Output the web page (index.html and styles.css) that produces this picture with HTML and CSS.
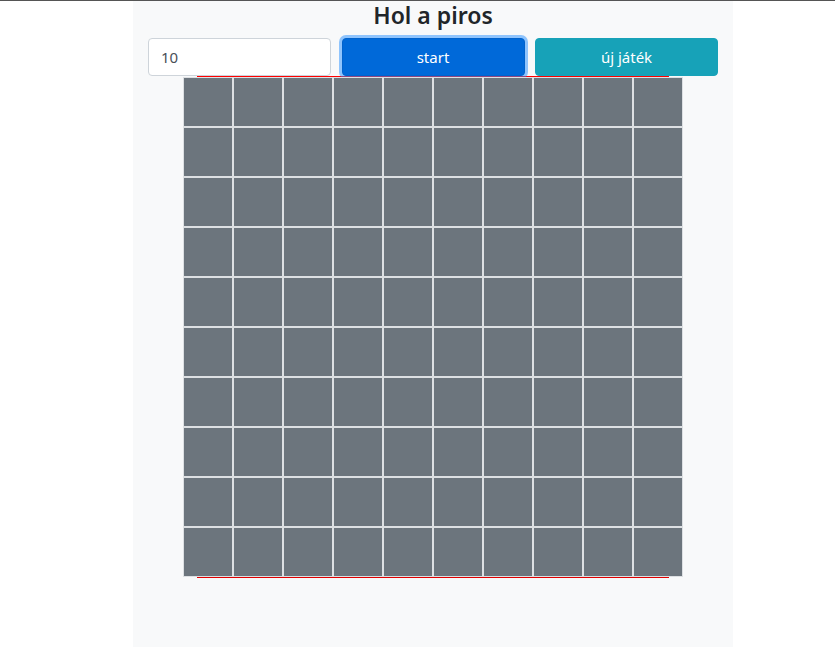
FILE: index.html
```html
<!DOCTYPE html>
<html lang="hu">
<head>
<meta charset="utf-8">
<title>Hol a piros</title>
<link rel="stylesheet" href="styles.css">
</head>
<body>
<main class="container">
  <h4 class="title">Hol a piros</h4>
  <div class="controls">
    <input class="field" type="text" value="10">
    <button class="btn btn-start">start</button>
    <button class="btn btn-new">új játék</button>
  </div>
  <div class="board-wrap">
    <div class="board" id="board"></div>
  </div>
</main>
<script src="script.js"></script>
</body>
</html>
```
FILE: styles.css
```css
html, body {
  margin: 0;
  padding: 0;
  background: #fff;
}
body {
  border-top: 1px solid #555;
  font-family: "Noto Sans", "Open Sans", sans-serif;
  color: #212529;
}
.container {
  width: 600px;
  margin: 0 0 0 133px;
  box-sizing: border-box;
  padding: 0 15px;
  background: #f8f9fa;
  min-height: calc(100vh - 1px);
}
.title {
  margin: 0 0 8px;
  font-size: 23px;
  line-height: 29px;
  font-weight: 600;
  text-align: center;
}
.controls {
  display: grid;
  grid-template-columns: repeat(3, 1fr);
  column-gap: 10.5px;
}
.field {
  height: 38px;
  box-sizing: border-box;
  border: 1px solid #ced4da;
  border-radius: 4px;
  padding: 6px 12px;
  font-family: inherit;
  font-size: 15px;
  color: #495057;
  background: #fff;
  outline: none;
  min-width: 0;
}
.btn {
  height: 38px;
  border: 1px solid transparent;
  border-radius: 4px;
  font-family: inherit;
  font-size: 15px;
  color: #fff;
  padding: 0 12px;
}
.btn-start {
  background: #0069d9;
  border-color: #0062cc;
  box-shadow: 0 0 0 3px rgba(38, 143, 255, 0.5);
}
.btn-new {
  background: #17a2b8;
  border-color: #17a2b8;
}
.board-wrap {
  width: 472px;
  margin: 0 auto;
  border-top: 1px solid #ff0000;
  border-bottom: 1px solid #e00000;
}
.board {
  width: 500px;
  margin: 0 -14px;
  display: grid;
  grid-template-columns: repeat(10, 50px);
  grid-auto-rows: 50px;
}
.cell {
  background: #6c757d;
  border: 1px solid #dde0e3;
}
```
FILE: script.js
```js
var b = document.getElementById('board');
for (var i = 0; i < 100; i++) {
  var c = document.createElement('div');
  c.className = 'cell';
  b.appendChild(c);
}
```
